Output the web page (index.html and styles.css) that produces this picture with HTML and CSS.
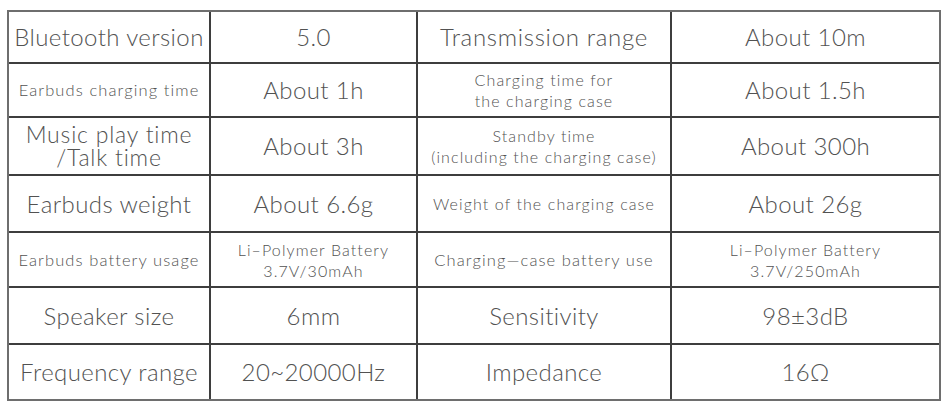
FILE: index.html
```html
<!DOCTYPE html>
<html>
<head>
<meta charset="utf-8">
<link rel="stylesheet" href="styles.css">
</head>
<body>
<div class="page">
  <div class="spec">
    <div class="cell lg">Bluetooth version</div>
    <div class="cell lg">5.0</div>
    <div class="cell lg wide">Transmission range</div>
    <div class="cell lg">About 10m</div>

    <div class="cell xs">Earbuds charging time</div>
    <div class="cell lg">About 1h</div>
    <div class="cell sm">Charging time for<br>the charging case</div>
    <div class="cell lg">About 1.5h</div>

    <div class="cell lg2">Music play time<br>/Talk time</div>
    <div class="cell lg">About 3h</div>
    <div class="cell sm">Standby time<br>(including the charging case)</div>
    <div class="cell lg">About 300h</div>

    <div class="cell lg">Earbuds weight</div>
    <div class="cell lg">About 6.6g</div>
    <div class="cell sm">Weight of the charging case</div>
    <div class="cell lg">About 26g</div>

    <div class="cell xs">Earbuds battery usage</div>
    <div class="cell sm">Li–Polymer Battery<br>3.7V/30mAh</div>
    <div class="cell md">Charging—case battery use</div>
    <div class="cell sm">Li–Polymer Battery<br>3.7V/250mAh</div>

    <div class="cell lg">Speaker size</div>
    <div class="cell lg">6mm</div>
    <div class="cell lg">Sensitivity</div>
    <div class="cell lg">98±3dB</div>

    <div class="cell lg">Frequency range</div>
    <div class="cell lg">20~20000Hz</div>
    <div class="cell lg">Impedance</div>
    <div class="cell lg">16Ω</div>
  </div>
</div>
</body>
</html>
```
FILE: styles.css
```css
html, body {
  margin: 0;
  padding: 0;
  background: #ffffff;
}
.page {
  width: 949px;
  height: 406px;
  padding: 10px 0 0 7px;
  box-sizing: border-box;
}
.spec {
  width: 934px;
  box-sizing: border-box;
  display: grid;
  grid-template-columns: 200px 205px 252px 267px;
  grid-template-rows: 50px 52px 56px 55px 53px 55px 54px;
  gap: 2px;
  background: #3e3e3e;
  border: 2px solid #6e6e6e;
  font-family: Lato, "Liberation Sans", sans-serif;
  font-weight: 300;
  color: #525252;
}
.cell {
  background: #ffffff;
  display: flex;
  align-items: center;
  justify-content: center;
  text-align: center;
  white-space: nowrap;
}
.lg {
  font-size: 24px;
  line-height: 24px;
  letter-spacing: 0.4px;
}
.lg2 {
  font-size: 23px;
  line-height: 23px;
  letter-spacing: 0.8px;
}
.wide {
  letter-spacing: 0.7px;
}
.md {
  font-size: 16.5px;
  letter-spacing: 1.1px;
}
.sm {
  font-size: 16px;
  line-height: 21px;
  letter-spacing: 1.1px;
}
.xs {
  font-size: 16.5px;
  letter-spacing: 1.1px;
}
```
